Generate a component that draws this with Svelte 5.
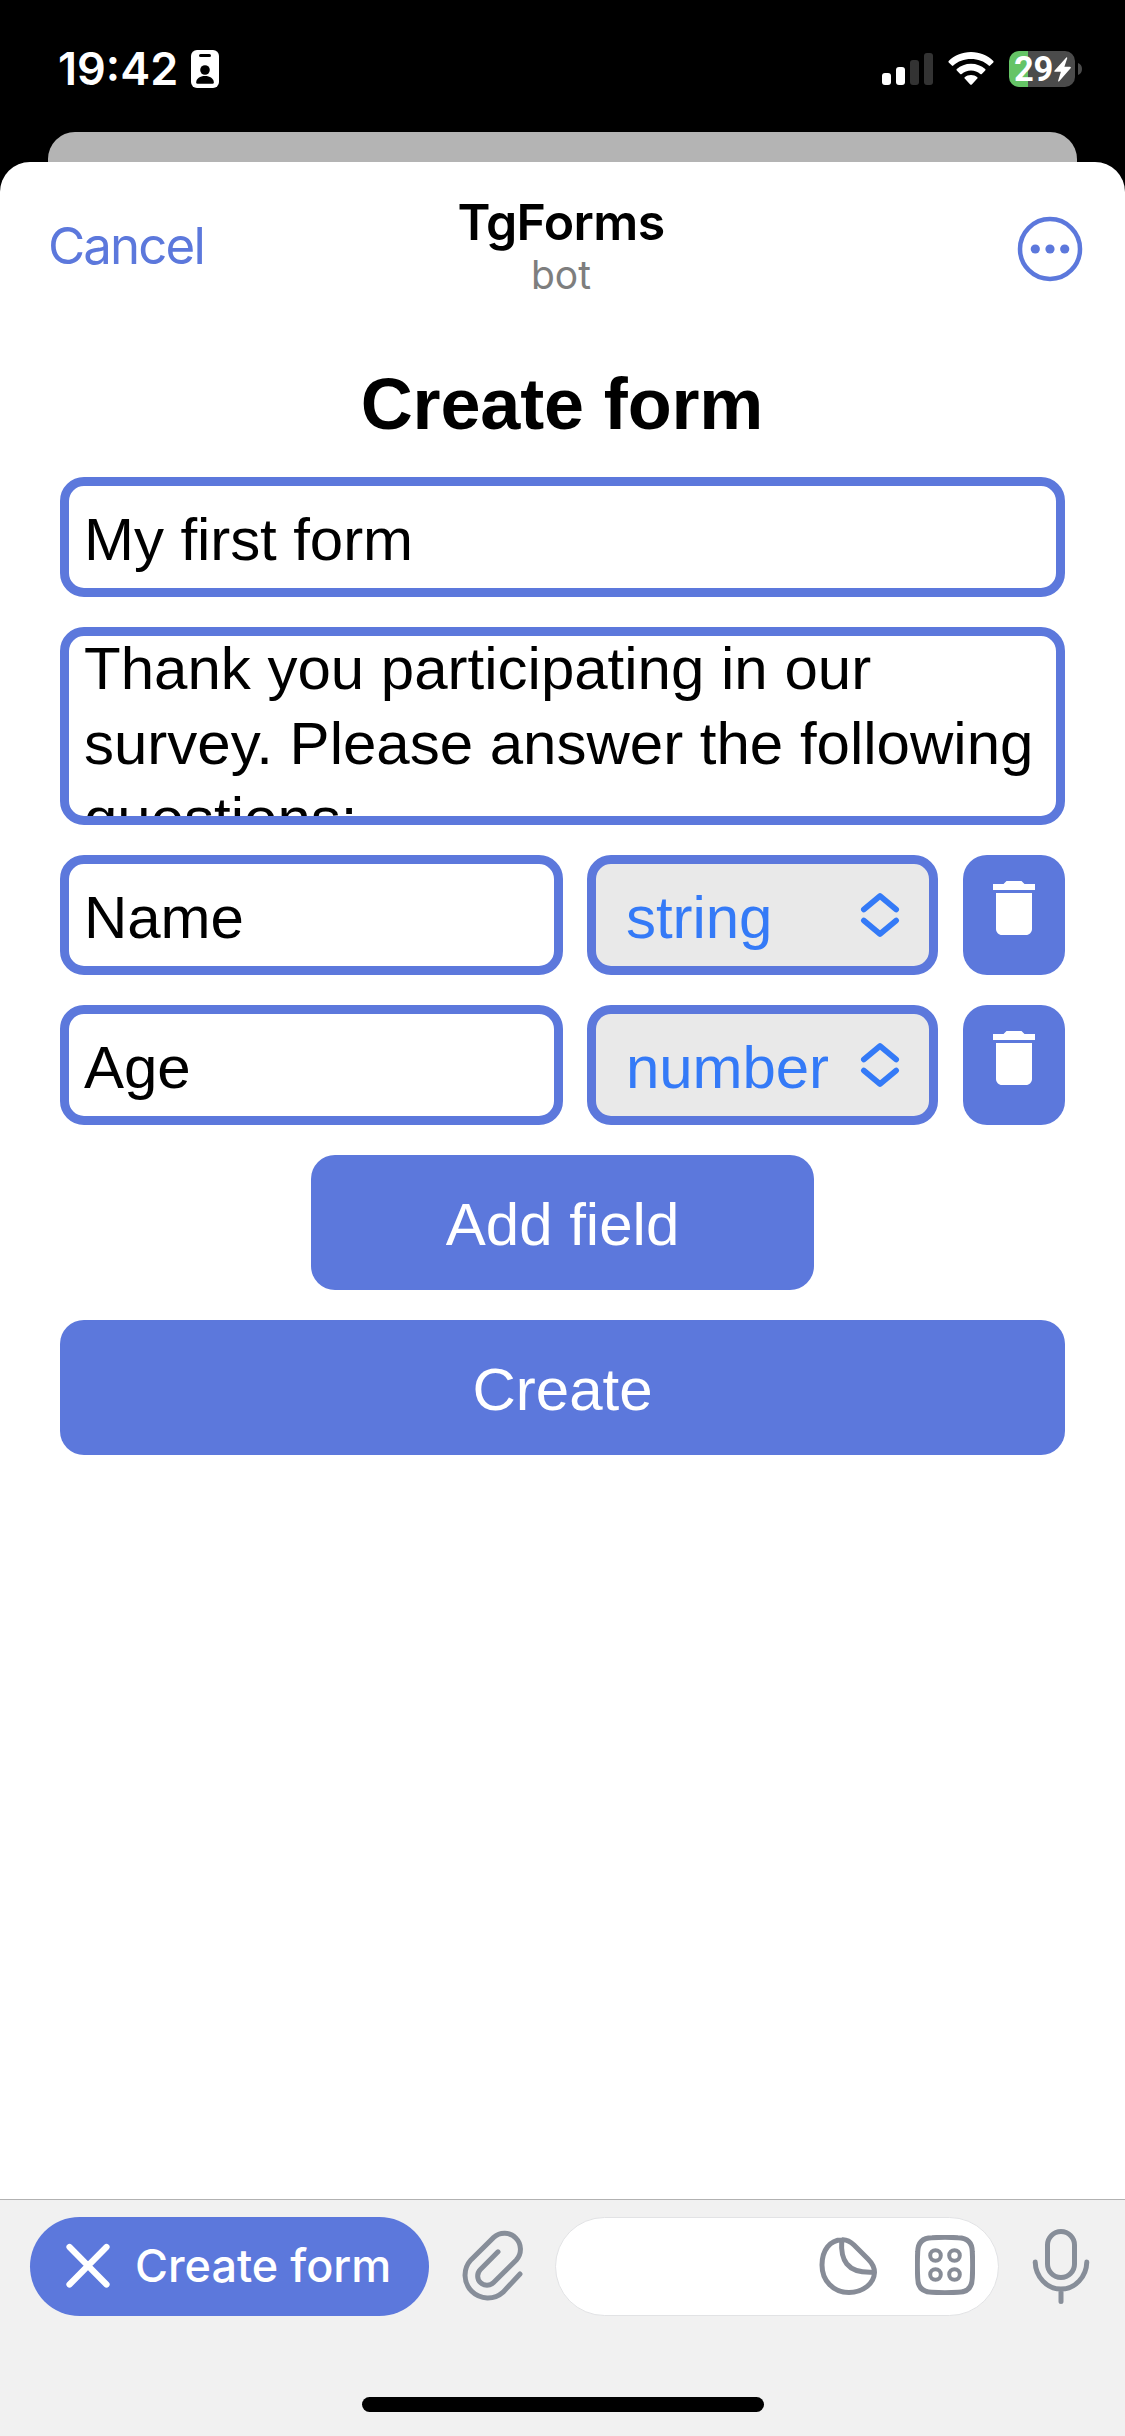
<script>
  const fields = [
    { name: 'Name', type: 'string' },
    { name: 'Age', type: 'number' }
  ];
  const bars = ['b1', 'b2', 'b3 dim', 'b4 dim'];
</script>

<div class="screen">
  <div class="status">
    <div class="time">
      <span class="clock">19:42</span>
      <svg class="badge" width="28" height="38" viewBox="0 0 28 38">
        <rect width="28" height="38" rx="6" fill="#fff" />
        <rect x="8" y="4" width="12" height="3" rx="1.5" />
        <circle cx="14" cy="20" r="4.8" />
        <path d="M5.2 32.5C5.2 28.5 9 26 14 26s8.800 2.500 8.800 6.500q0 1.300-1.300 1.300h-15q-1.300 0-1.300-1.300Z" />
      </svg>
    </div>
    <div class="indicators">
      <div class="signal">
        {#each bars as bar}<i class={bar}></i>{/each}
      </div>
      <svg class="wifi" width="46" height="34" viewBox="0 0 46 34" fill="#fff">
        <path d="M23 0C14 0 6 3.500.7 9q-.7.700 0 1.400l3.200 3.200q.7.700 1.400 0C10 9.300 16 7 23 7s13 2.300 17.700 6.600q.7.700 1.400 0l3.200-3.200q.7-.7 0-1.400C40 3.500 32 0 23 0Z" />
        <path d="M23 11.700c-5.500 0-10.400 2-14.200 5.400q-.8.700 0 1.400l3.400 3.400q.7.700 1.500 0c2.500-2.100 5.700-3.400 9.300-3.400s6.800 1.300 9.300 3.400q.8.700 1.500 0l3.400-3.400q.8-.7 0-1.400C33.400 13.700 28.500 11.700 23 11.700Z" />
        <path d="M23 23c-2.400 0-4.600.8-6.300 2.200q-.8.700 0 1.400l5.500 5.800q.8.800 1.600 0l5.500-5.800q.8-.7 0-1.400C27.600 23.800 25.400 23 23 23Z" />
      </svg>
      <div class="battery">
        <span class="level">29</span>
        <svg width="17" height="25" viewBox="0 0 17 25" fill="#fff">
          <path d="M12.300.4.6 13.400q-.9 1.400.7 1.400h5.600L4.200 23.500q-.3 1.600 1 .7L16.600 11.200q.8-1.400-.7-1.400h-5.500l2.800-8.500q.2-1.500-.9-.9Z" />
        </svg>
      </div>
      <svg class="nub" width="4" height="12" viewBox="0 0 4 12"><path d="M0 0Q4 1.500 4 6T0 12Z" fill="#4b4b4b" /></svg>
    </div>
  </div>
  <div class="behind"></div>

  <main class="sheet">
    <header>
      <span class="cancel">Cancel</span>
      <div class="titles">
        <strong>TgForms</strong>
        <small>bot</small>
      </div>
      <svg class="more" width="66" height="66" viewBox="0 0 66 66" fill="#5c78dc">
        <circle cx="33" cy="33" r="30" fill="none" stroke="#5c78dc" stroke-width="4.5" />
        <circle cx="18.300" cy="33" r="4.600" />
        <circle cx="33" cy="33" r="4.600" />
        <circle cx="47.700" cy="33" r="4.600" />
      </svg>
    </header>

    <h1>Create form</h1>

    <div class="form">
      <div class="box line">My first form</div>
      <div class="box area">
        <p>Thank you participating in our survey. Please answer the following questions:</p>
      </div>
      {#each fields as field}
        <div class="row">
          <div class="box line name">{field.name}</div>
          <div class="box line select">
            <span>{field.type}</span>
            <svg width="40" height="46" viewBox="0 0 40 46" fill="none" stroke="#347af7" stroke-width="5.600" stroke-linecap="round" stroke-linejoin="round">
              <path d="M3.800 17.500 20 4l16.200 13.500M3.800 28.500 20 42l16.200-13.500" />
            </svg>
          </div>
          <button class="trash" aria-label="Delete field">
            <svg width="72" height="72" viewBox="0 0 24 24" fill="#fff">
              <path d="M6 19c0 1.100.9 2 2 2h8c1.100 0 2-.9 2-2V7H6v12zM19 4h-3.500l-1-1h-5l-1 1H5v2h14V4z" />
            </svg>
          </button>
        </div>
      {/each}
      <button class="action add">Add field</button>
      <button class="action">Create</button>
    </div>
  </main>

  <footer>
    <div class="toolbar">
      <div class="pill">
        <svg width="46" height="46" viewBox="0 0 46 46" stroke="#fff" stroke-width="6.200" stroke-linecap="round">
          <path d="M4.500 4l37 37.500M41.500 4l-37 37.500" />
        </svg>
        <span>Create form</span>
      </div>
      <svg class="clip" width="66" height="76" viewBox="0 0 66 76" fill="none" stroke="#878e99" stroke-width="5" stroke-linecap="round">
        <path d="M38 24.800 20.400 42.400A9.300 9.300 0 0 0 33.600 55.600L56.300 33A16 16 0 0 0 33.700 10.400L10.900 32.900A22.800 22.800 0 0 0 43.100 65.100L60 47" />
      </svg>
      <div class="message">
        <svg width="62" height="62" viewBox="0 0 62 62" fill="none" stroke="#878c97" stroke-width="5">
          <path d="M25 4.700C30 4.300 33.500 6.500 37 10L51 24C55 28 57.500 32 57.500 37.500 57 48.500 46 57.500 32 57.500 16 57.500 5 45.500 5 30 5 15 13 5 25 4.700Z" />
          <path d="M24.700 6C23.500 24 29 38.500 56 37.300" />
        </svg>
        <svg width="60" height="60" viewBox="0 0 60 60" fill="none" stroke="#878c97">
          <path stroke-width="5" d="M17 2.700Q30 2 43 2.700 57.300 3 57.300 17 58 30 57.300 43 57 57.300 43 57.300 30 58 17 57.300 2.700 57 2.700 43 2 30 2.700 17 3 2.700 17 2.700Z" />
          <g stroke-width="4">
            <circle cx="20.500" cy="20.500" r="5.300" />
            <circle cx="39.500" cy="20.500" r="5.300" />
            <circle cx="20.500" cy="39.500" r="5.300" />
            <circle cx="39.500" cy="39.500" r="5.300" />
          </g>
        </svg>
      </div>
      <svg class="mic" width="58" height="78" viewBox="0 0 58 78" fill="none" stroke="#878e99" stroke-width="5" stroke-linecap="round">
        <rect x="15.500" y="4.500" width="27" height="46" rx="13.500" />
        <path d="M3.200 35C3.500 50 15 62 29 62s25.500-12 25.800-27M29 62v12.500" />
      </svg>
    </div>
    <div class="home"></div>
  </footer>
</div>

<style>
  :global(body) {
    margin: 0;
    background: #000;
  }
  .screen {
    display: flex;
    flex-direction: column;
    width: 1125px;
    height: 2436px;
    overflow: hidden;
    background: #000;
    font-family: Inter, 'Liberation Sans', sans-serif;
  }
  .screen * {
    box-sizing: border-box;
  }
  svg {
    display: block;
    flex: none;
  }
  .status {
    display: flex;
    justify-content: space-between;
    height: 132px;
    flex: none;
    padding: 50px 43px 0 58px;
    color: #fff;
  }
  .time {
    display: flex;
    height: 38px;
  }
  .clock {
    width: 133px;
    font-size: 45px;
    font-weight: 600;
    line-height: 38px;
    letter-spacing: 0;
    white-space: nowrap;
  }
  .indicators {
    display: flex;
    height: 38px;
  }
  .signal {
    display: flex;
    align-items: flex-end;
    gap: 5px;
    height: 35px;
  }
  .signal i {
    width: 9px;
    border-radius: 3px;
    background: #fff;
  }
  .signal .dim {
    background: #333;
  }
  .b1 { height: 12px; }
  .b2 { height: 18px; }
  .b3 { height: 25px; }
  .b4 { height: 32px; }
  .wifi {
    margin: 2px 15px 0 15px;
  }
  .battery {
    display: flex;
    align-items: center;
    gap: 2px;
    width: 66px;
    height: 36px;
    margin-top: 1px;
    padding-left: 5px;
    border-radius: 10px;
    background: linear-gradient(90deg, #65c466 19px, #4b4b4b 19px);
  }
  .level {
    width: 38px;
    font-family: Roboto, Inter, sans-serif;
    font-size: 34.500px;
    font-weight: 700;
    line-height: 36px;
    letter-spacing: -0.300px;
  }
  .nub {
    margin: 13px 0 0 3px;
  }
  .behind {
    flex: none;
    height: 30px;
    margin: 0 48px;
    border-radius: 27px 27px 0 0;
    background: #b4b4b4;
  }
  .sheet {
    flex: 1;
    background: #fff;
    border-radius: 30px 30px 0 0;
  }
  header {
    display: grid;
    grid-template-columns: 1fr auto 1fr;
    height: 168px;
    padding: 30px 42px 0 48px;
  }
  .cancel {
    padding-top: 23px;
    color: #5c78dc;
    font-size: 51px;
    line-height: 62px;
    letter-spacing: -1.900px;
  }
  .titles {
    display: flex;
    flex-direction: column;
    align-items: center;
    padding-right: 9px;
  }
  .titles strong {
    font-size: 50px;
    font-weight: 600;
    line-height: 60px;
    letter-spacing: -0.600px;
  }
  .titles small {
    color: #7e7e7e;
    font-size: 39px;
    line-height: 46px;
  }
  .more {
    justify-self: end;
    margin-top: 24px;
  }
  h1 {
    margin: 33px 0 0 0;
    padding-right: 1px;
    text-align: center;
    font: bold 72px/82px 'Liberation Sans', sans-serif;
    letter-spacing: -0.150px;
  }
  .form {
    display: flex;
    flex-direction: column;
    gap: 30px;
    padding: 32px 60px 0;
    font-family: 'Liberation Sans', sans-serif;
    font-size: 60px;
  }
  .box {
    border: 9px solid #5c78dc;
    border-radius: 24px;
    padding: 0 15px;
    overflow: hidden;
  }
  .line {
    height: 120px;
    padding-top: 3px;
    line-height: 102px;
    letter-spacing: -0.080px;
  }
  .area {
    height: 198px;
  }
  .area p {
    margin: -5px -10px 0 0;
    line-height: 75px;
  }
  .row {
    display: grid;
    grid-template-columns: 503px 351px 102px;
    column-gap: 24px;
  }
  .select {
    display: flex;
    justify-content: space-between;
    padding: 3px 29px 0 30px;
    background: #e9e9e9;
    color: #347af7;
  }
  .select svg {
    margin-top: 25px;
  }
  button {
    border: 0;
    border-radius: 24px;
    background: #5c78dc;
    color: #fff;
    font: inherit;
  }
  .trash {
    display: flex;
    justify-content: center;
    width: 102px;
    height: 120px;
    margin-left: 1px;
    padding: 17px 0 0 0;
  }
  .action {
    height: 135px;
    padding: 3px 0 0 0;
  }
  .add {
    align-self: center;
    width: 503px;
  }
  footer {
    flex: none;
    height: 237px;
    border-top: 1px solid #b2b2b2;
    background: #f1f1f1;
  }
  .toolbar {
    display: flex;
    align-items: flex-start;
    padding: 17px 0 0 30px;
  }
  .pill {
    display: flex;
    align-items: center;
    gap: 24px;
    width: 399px;
    height: 99px;
    padding: 0 0 2px 35px;
    border-radius: 50px;
    background: #5c78dc;
    color: #fff;
    font-size: 45px;
    font-weight: 500;
    white-space: nowrap;
  }
  .clip {
    margin: 10px 29px 0 31px;
  }
  .message {
    display: flex;
    justify-content: flex-end;
    gap: 36px;
    width: 444px;
    height: 99px;
    padding: 17px 23px 0 0;
    border: 1px solid #e2e3e5;
    border-radius: 50px;
    background: #fff;
  }
  .mic {
    margin: 10px 0 0 33px;
  }
  .home {
    width: 402px;
    height: 15px;
    margin: 81px auto 0;
    border-radius: 8px;
    background: #000;
  }
</style>
